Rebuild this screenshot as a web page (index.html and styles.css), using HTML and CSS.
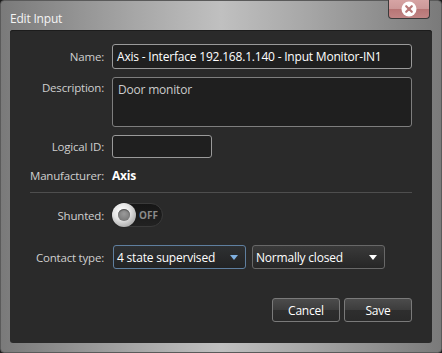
FILE: index.html
```html
<!DOCTYPE html>
<html>
<head>
<meta charset="utf-8">
<link rel="stylesheet" href="styles.css">
</head>
<body>
<div class="window">
  <div class="titlebar">
    <span class="title">Edit Input</span>
    <div class="close-btn">
      <svg width="16" height="16" viewBox="0 0 16 16">
        <circle cx="8" cy="8" r="7.5" fill="#ffffff"/>
        <path d="M5.2 5.2 L10.8 10.8 M10.8 5.2 L5.2 10.8" stroke="#b87878" stroke-width="2.2" stroke-linecap="round"/>
      </svg>
    </div>
  </div>
  <div class="panel">
    <div class="row row-name">
      <label class="lbl">Name:</label>
      <div class="field input-name">Axis - Interface 192.168.1.140 - Input Monitor-IN1</div>
    </div>
    <div class="row row-desc">
      <label class="lbl lbl-top">Description:</label>
      <div class="field input-desc">Door monitor</div>
    </div>
    <div class="row row-lid">
      <label class="lbl">Logical ID:</label>
      <div class="field input-lid"></div>
    </div>
    <div class="row row-manu">
      <label class="lbl">Manufacturer:</label>
      <span class="manu">Axis</span>
    </div>
    <div class="sep"></div>
    <div class="row row-shunt">
      <label class="lbl">Shunted:</label>
      <div class="toggle">
        <div class="knob"><div class="knob-hole"></div></div>
        <span class="off">OFF</span>
      </div>
    </div>
    <div class="row row-contact">
      <label class="lbl">Contact type:</label>
      <div class="combo combo-focus">
        <span>4 state supervised</span>
        <svg class="arrow" width="8" height="5" viewBox="0 0 8 5"><path d="M0 0 L8 0 L4 5 Z" fill="#7fb0e0"/></svg>
      </div>
      <div class="combo">
        <span>Normally closed</span>
        <svg class="arrow" width="8" height="5" viewBox="0 0 8 5"><path d="M0 0 L8 0 L4 5 Z" fill="#ffffff"/></svg>
      </div>
    </div>
    <div class="buttons">
      <div class="btn">Cancel</div>
      <div class="btn">Save</div>
    </div>
  </div>
</div>
</body>
</html>
```
FILE: styles.css
```css
html, body {
  margin: 0;
  padding: 0;
  width: 442px;
  height: 353px;
  overflow: hidden;
  background: #1c1c1c;
  font-family: "Open Sans", "Noto Sans", sans-serif;
  font-size: 12px;
  letter-spacing: -0.2px;
}
.window {
  position: relative;
  box-sizing: border-box;
  width: 442px;
  height: 353px;
  border: 1px solid #5a5a5a;
  border-radius: 4px;
  background: linear-gradient(to right, #7a7a7a 0%, #a6a6a6 30%, #c0c0c0 50%, #a6a6a6 70%, #7a7a7a 100%);
  padding: 0 9px 9px 9px;
  display: flex;
  flex-direction: column;
}
.titlebar {
  height: 29px;
  display: flex;
  align-items: center;
  flex: none;
}
.title {
  color: #f4f4f4;
  font-size: 12px;
  padding-top: 6px;
}
.close-btn {
  position: absolute;
  left: 387px;
  top: -1px;
  width: 42px;
  height: 19px;
  box-sizing: border-box;
  border: 1px solid #3a3a3a;
  border-top: none;
  border-radius: 0 0 4px 4px;
  background: linear-gradient(to bottom, #d6a4a4 0%, #cc9898 50%, #b87676 52%, #c08484 100%);
  display: flex;
  align-items: center;
  justify-content: center;
}
.panel {
  flex: 1;
  background: #2a2a2a;
  border-radius: 3px;
  box-shadow: inset 0 1px 0 #1c1c1c;
  padding: 14px 20px 0 20px;
  display: flex;
  flex-direction: column;
}
.row {
  display: flex;
  align-items: center;
}
.lbl {
  width: 74px;
  flex: none;
  text-align: right;
  color: #cfcfcf;
  margin-right: 8px;
  white-space: nowrap;
  font-size: 11.5px;
}
.lbl-top {
  align-self: flex-start;
  padding-top: 3px;
}
.field {
  box-sizing: border-box;
  border: 1px solid #9a9a9a;
  border-radius: 3px;
  background: #1f1f1f;
  color: #ffffff;
}
.input-name {
  width: 300px;
  height: 25px;
  padding: 0 4px;
  line-height: 23px;
  font-size: 12px;
  white-space: nowrap;
}
.row-desc { margin-top: 8px; align-items: flex-start; }
.input-desc {
  width: 300px;
  height: 50px;
  padding: 3px 5px;
  color: #cccccc;
  font-size: 12px;
  border-color: #7e7e7e;
}
.row-lid { margin-top: 8px; }
.input-lid {
  width: 100px;
  height: 23px;
}
.row-manu { margin-top: 8px; height: 18px; }
.manu {
  color: #ffffff;
  font-weight: bold;
  font-size: 12px;
}
.sep {
  margin-top: 8px;
  height: 1px;
  background: #4e4e4e;
  width: 382px;
}
.row-shunt { margin-top: 10px; }
.toggle {
  width: 51px;
  height: 24px;
  box-sizing: border-box;
  border-radius: 12px;
  background: linear-gradient(to bottom, #161616, #222222);
  border: 1px solid #3a3a3a;
  position: relative;
  display: flex;
  align-items: center;
}
.knob {
  width: 24px;
  height: 24px;
  margin-left: -1px;
  border-radius: 50%;
  background: radial-gradient(circle at 40% 35%, #ffffff 0%, #e4e4e4 40%, #a8a8a8 80%, #8a8a8a 100%);
  display: flex;
  align-items: center;
  justify-content: center;
  box-shadow: 0 0 1px #000;
}
.knob-hole {
  width: 12px;
  height: 12px;
  border-radius: 50%;
  background: radial-gradient(circle at 50% 40%, #9a9a9a, #6e6e6e);
  box-shadow: inset 0 1px 1px #555;
}
.off {
  color: #8a8a8a;
  font-size: 10px;
  font-weight: bold;
  margin-left: 3px;
  letter-spacing: 0;
}
.row-contact { margin-top: 18px; }
.row-contact .lbl { margin-right: 9px; }
.combo {
  box-sizing: border-box;
  width: 133px;
  height: 24px;
  border: 1px solid #686868;
  border-radius: 3px;
  background: linear-gradient(to bottom, #3a3a3a, #262626);
  color: #ffffff;
  display: flex;
  align-items: center;
  justify-content: space-between;
  padding: 0 7px 0 3px;
  font-size: 12px;
  margin-right: 6px;
  white-space: nowrap;
}
.combo-focus {
  border-color: #5f7f9f;
  background: linear-gradient(to bottom, #2e3032, #222324);
}
.buttons {
  margin-top: 29px;
  display: flex;
  justify-content: flex-end;
  gap: 4px;
}
.btn {
  box-sizing: border-box;
  width: 68px;
  height: 24px;
  border: 1px solid #7a7a7a;
  border-radius: 3px;
  background: linear-gradient(to bottom, #4c4c4c 0%, #3c3c3c 50%, #2e2e2e 51%, #2a2a2a 100%);
  color: #ffffff;
  display: flex;
  align-items: center;
  justify-content: center;
  font-size: 12px;
}
```
